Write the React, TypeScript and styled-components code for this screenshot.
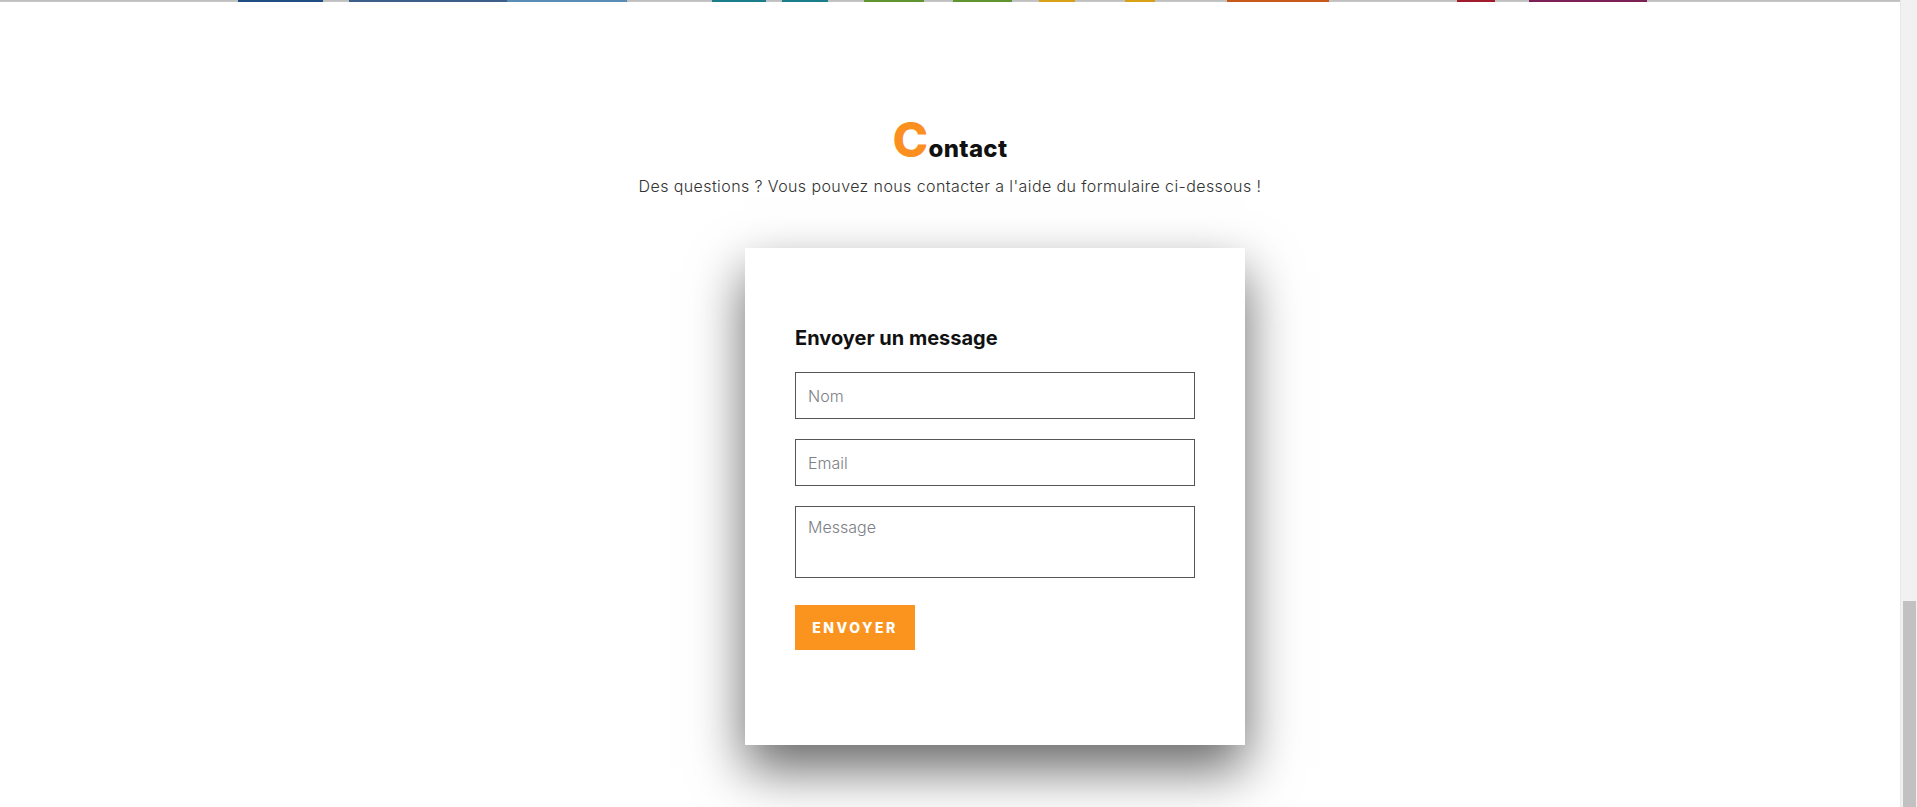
import React from 'react';
import styled, { createGlobalStyle } from 'styled-components';

const GlobalStyle = createGlobalStyle`
  html, body {
    margin: 0;
    padding: 0;
    background: #fff;
    overflow: hidden;
  }
  * {
    box-sizing: border-box;
  }
`;

// top strip segments, widths in px, null = gray filler
const segments: Array<[number, string | null]> = [
  [238, null],
  [85, '#1f4f82'],
  [26, null],
  [158, '#3e5f8a'],
  [120, '#5a8db5'],
  [85, null],
  [54, '#1b7e8a'],
  [16, null],
  [46, '#1b7e8a'],
  [36, null],
  [60, '#5f9530'],
  [29, null],
  [59, '#5f9530'],
  [27, null],
  [36, '#d8a116'],
  [50, null],
  [30, '#d8a116'],
  [72, null],
  [102, '#c9581b'],
  [128, null],
  [38, '#a11b2c'],
  [34, null],
  [118, '#7b2156'],
];

const Page = styled.div`
  display: flex;
  width: 100%;
  height: 807px;
  overflow: hidden;
  font-family: Inter, "Open Sans", sans-serif;
`;

const Main = styled.main`
  flex: 1;
  display: flex;
  flex-direction: column;
  align-items: center;
`;

const Strip = styled.div`
  align-self: stretch;
  display: flex;
  height: 2px;
  background: linear-gradient(#bcbcbc, #c9c9c9);
`;

const Segment = styled.span<{ $w: number; $c: string | null }>`
  flex: 0 0 ${(p) => p.$w}px;
  background: ${(p) => p.$c || 'transparent'};
`;

const Title = styled.h2`
  margin: 114px 0 0;
  font-size: 24px;
  line-height: 48px;
  font-weight: 800;
  color: #111;
  letter-spacing: 0.3px;
`;

const BigLetter = styled.span`
  font-size: 48px;
  color: #fb8f1f;
  font-weight: 800;
`;

const Subtitle = styled.p`
  margin: 3px 0 0;
  font-size: 16px;
  font-weight: 300;
  color: #333;
  letter-spacing: 0.4px;
`;

const Card = styled.form`
  margin: 52px 0 0 90px;
  width: 500px;
  padding: 76px 50px 95px;
  background: #fff;
  box-shadow: 0 24px 50px rgba(0, 0, 0, 0.6);
  display: flex;
  flex-direction: column;
`;

const CardTitle = styled.h3`
  margin: 0 0 20px;
  font-size: 20px;
  line-height: 28px;
  font-weight: 700;
  color: #111;
`;

const Field = styled.input`
  height: 47px;
  width: 100%;
  margin-bottom: 20px;
  padding: 0 12px;
  border: 1px solid #555;
  border-radius: 0;
  font-family: inherit;
  font-size: 16px;
  font-weight: 300;
  outline: none;

  &::placeholder {
    color: #7d8086;
  }
`;

const Area = styled.textarea`
  height: 72px;
  width: 100%;
  padding: 10px 12px;
  border: 1px solid #555;
  border-radius: 0;
  font-family: inherit;
  font-size: 16px;
  font-weight: 300;
  resize: none;
  outline: none;
  display: block;

  &::placeholder {
    color: #7d8086;
  }
`;

const SendButton = styled.button`
  margin-top: 27px;
  align-self: flex-start;
  width: 120px;
  height: 45px;
  border: none;
  background: #fb931f;
  color: #fff;
  font-family: inherit;
  font-size: 14px;
  font-weight: 800;
  letter-spacing: 2.5px;
  cursor: pointer;
`;

const Scrollbar = styled.div`
  flex: 0 0 17px;
  display: flex;
  flex-direction: column;
  justify-content: flex-end;
  background: #f1f1f1;
  border-left: 1px solid #e8e8e8;
`;

const Thumb = styled.div`
  height: 206px;
  margin: 0 1px 0 2px;
  background: #c1c1c1;
`;

export default function App() {
  return (
    <>
      <GlobalStyle />
      <Page>
        <Main>
          <Strip>
            {segments.map(([w, c], i) => (
              <Segment key={i} $w={w} $c={c} />
            ))}
          </Strip>
          <Title>
            <BigLetter>C</BigLetter>ontact
          </Title>
          <Subtitle>
            Des questions ? Vous pouvez nous contacter a l'aide du formulaire ci-dessous !
          </Subtitle>
          <Card onSubmit={(e) => e.preventDefault()}>
            <CardTitle>Envoyer un message</CardTitle>
            <Field type="text" placeholder="Nom" />
            <Field type="email" placeholder="Email" />
            <Area placeholder="Message" />
            <SendButton type="submit">ENVOYER</SendButton>
          </Card>
        </Main>
        <Scrollbar>
          <Thumb />
        </Scrollbar>
      </Page>
    </>
  );
}
